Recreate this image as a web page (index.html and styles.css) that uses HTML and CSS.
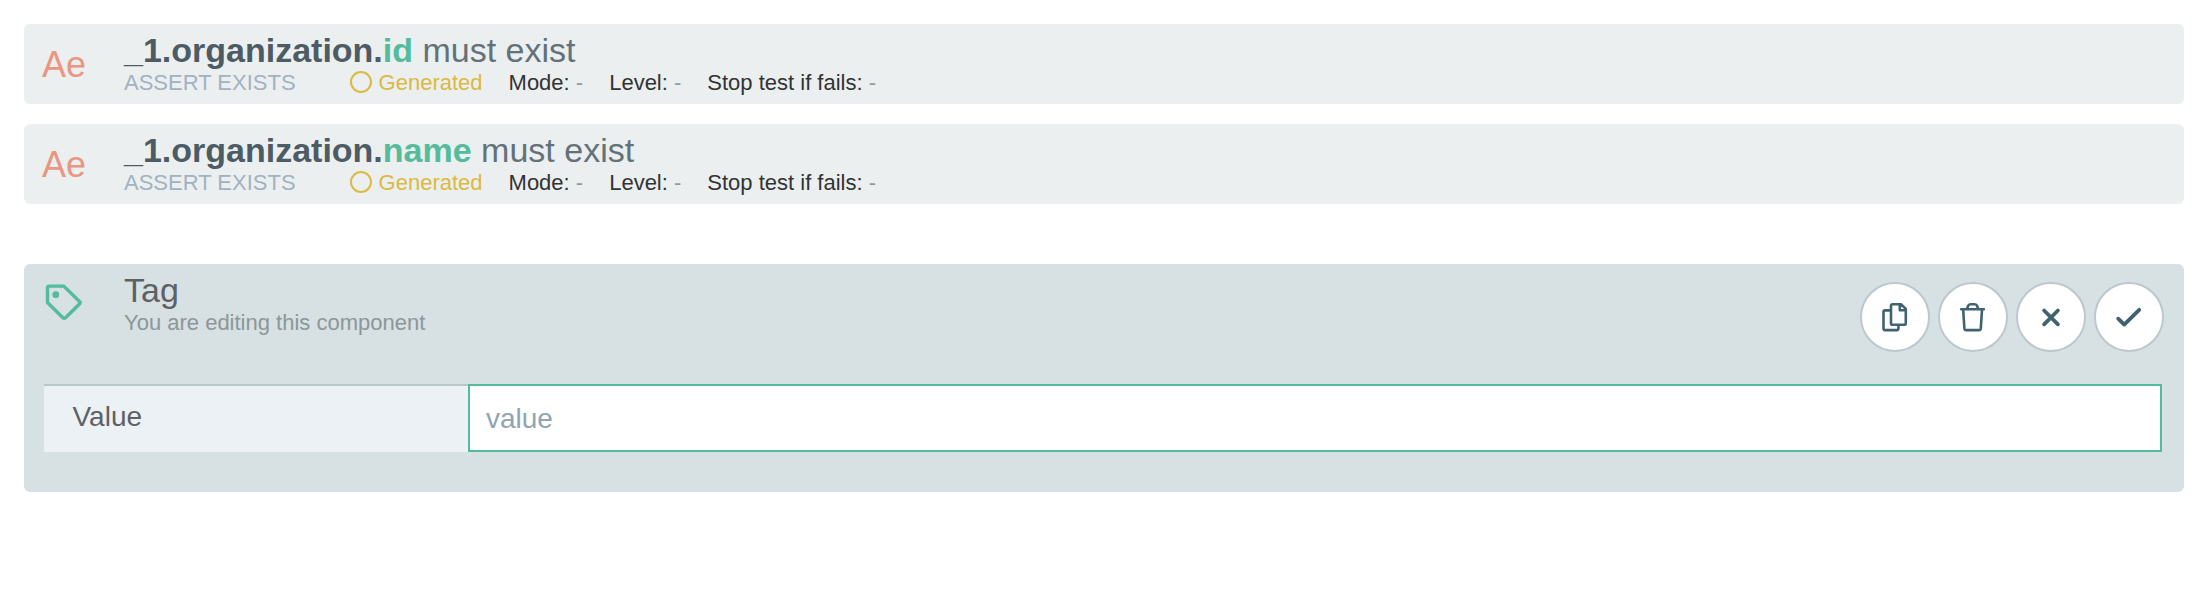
FILE: index.html
```html
<!DOCTYPE html>
<html lang="en">
<head>
<meta charset="utf-8">
<title>Test components</title>
<link rel="stylesheet" href="styles.css">
</head>
<body>
<main class="components">
  <article class="card">
    <div class="kind">Ae</div>
    <div class="body">
      <h2 class="title"><b>_1.organization.<span class="leaf">id</span></b> must exist</h2>
      <div class="meta">
        <span class="type">ASSERT EXISTS</span>
        <span class="generated"><i class="ring"></i>Generated</span>
        <span>Mode: <em>-</em></span>
        <span>Level: <em>-</em></span>
        <span>Stop test if fails: <em>-</em></span>
      </div>
    </div>
  </article>
  <article class="card">
    <div class="kind">Ae</div>
    <div class="body">
      <h2 class="title"><b>_1.organization.<span class="leaf">name</span></b> must exist</h2>
      <div class="meta">
        <span class="type">ASSERT EXISTS</span>
        <span class="generated"><i class="ring"></i>Generated</span>
        <span>Mode: <em>-</em></span>
        <span>Level: <em>-</em></span>
        <span>Stop test if fails: <em>-</em></span>
      </div>
    </div>
  </article>
  <section class="editor">
    <header class="editor-head">
      <svg class="tag-icon" viewBox="0 0 40 40" aria-hidden="true">
        <path d="M5.2 4.1H19.8L35.5 19.5Q36.7 20.8 35.5 22L21.5 35.8Q20.2 36.9 18.9 35.8L3.5 20.5V5.8Q3.5 4.1 5.2 4.1Z"/>
        <circle cx="11.8" cy="12.7" r="3.4"/>
      </svg>
      <div class="body">
        <h2 class="title editor-title">Tag</h2>
        <div class="hint">You are editing this component</div>
      </div>
      <div class="actions">
        <button class="action" aria-label="Copy">
          <svg viewBox="0 0 70 70"><path d="M30.5 28.4H25Q23.5 28.4 23.5 29.9V46.6Q23.5 48.1 25 48.1H36.9Q38.4 48.1 38.4 46.6V43.5M32.6 22.3H41.2L45.8 26.9V41.2Q45.8 42.8 44.2 42.8H32.6Q31 42.8 31 41.2V23.9Q31 22.3 32.6 22.3ZM39.8 22.8V28.3H45.4"/></svg>
        </button>
        <button class="action" aria-label="Delete">
          <svg viewBox="0 0 70 70"><path d="M23.2 27.3H45.9M25.2 27.8L26.4 46.4Q26.6 48.1 28.2 48.1H41Q42.6 48.1 42.8 46.4L44 27.8M29 27L30 24Q30.7 22.3 32.4 22.3H36.8Q38.5 22.3 39.2 24L40.2 27"/></svg>
        </button>
        <button class="action" aria-label="Cancel">
          <svg viewBox="0 0 70 70"><path class="heavy" d="M28.1 28.5L41.9 42.3M41.9 28.5L28.1 42.3"/></svg>
        </button>
        <button class="action" aria-label="Confirm">
          <svg viewBox="0 0 70 70"><path class="heavy" d="M24.2 36.7L30.2 42.6L45.2 27.8"/></svg>
        </button>
      </div>
    </header>
    <div class="field">
      <label class="field-label" for="value">Value</label>
      <input class="field-input" id="value" type="text" placeholder="value">
    </div>
  </section>
</main>
</body>
</html>
```
FILE: styles.css
```css
* { box-sizing: border-box; }

body {
  margin: 0;
  background: #fff;
  font-family: "Liberation Sans", Arial, sans-serif;
}

.components {
  display: flex;
  flex-direction: column;
  gap: 20px;
  padding: 24px 10px 0 24px;
}

.card {
  display: flex;
  height: 80px;
  border-radius: 6px;
  background: #ebeff0;
}

.kind {
  width: 100px;
  padding-left: 18px;
  font-size: 36px;
  line-height: 82px;
  color: #e99682;
}

.body { padding-top: 6px; }

.title {
  margin: 0;
  font-size: 34px;
  font-weight: 400;
  line-height: 40px;
  color: #637178;
}

.title b { color: #4d5b64; }
.title .leaf { color: #54bb9d; }

.meta {
  display: flex;
  gap: 26px;
  padding-top: 1px;
  font-size: 22px;
  line-height: 24px;
  color: #333;
}

.meta em { font-style: normal; color: #8f9a9d; }
.type { margin-right: 28.5px; color: #a1b2c1; }

.generated {
  display: flex;
  gap: 6.5px;
  color: #dcb942;
}

.ring {
  width: 22px;
  height: 22px;
  border: 2px solid #dcb942;
  border-radius: 50%;
}

.editor {
  height: 228px;
  margin-top: 40px;
  padding: 0 22px 0 20px;
  border-radius: 6px;
  background: #d7e0e2;
}

.editor-head {
  display: flex;
  height: 120px;
  margin-right: -2px;
}

.tag-icon {
  width: 40px;
  height: 40px;
  margin: 18px 40px 0 0;
  fill: none;
  stroke: #54bb9d;
  stroke-width: 3.4;
  stroke-linejoin: round;
}

.tag-icon circle { fill: #54bb9d; stroke: none; }
.editor-title { color: #5e6163; }

.hint {
  padding-top: 1px;
  font-size: 22px;
  line-height: 24px;
  color: #8c9799;
}

.actions {
  display: flex;
  gap: 8px;
  margin: 18px 0 0 auto;
}

.action {
  width: 70px;
  height: 70px;
  padding: 0;
  border: 2px solid #bcc8ce;
  border-radius: 50%;
  background: #fff;
}

.action svg {
  display: block;
  width: 70px;
  height: 70px;
  margin: -2px;
  fill: none;
  stroke: #3f6370;
  stroke-width: 2.6;
  stroke-linecap: round;
  stroke-linejoin: round;
}

.action .heavy { stroke-width: 3.8; }

.field { display: flex; height: 68px; }

.field-label {
  width: 424px;
  padding-left: 28.5px;
  border-top: 2px solid #b9c7cb;
  background: #ebf1f5;
  font-size: 28px;
  line-height: 61px;
  color: #5e6163;
}

.field-input {
  flex: 1;
  padding: 2px 16px 0;
  border: 2px solid #54bb9d;
  border-radius: 0;
  background: #fff;
  font: 28px "Liberation Sans", Arial, sans-serif;
}

.field-input::placeholder { color: #8fa5b3; }
```
